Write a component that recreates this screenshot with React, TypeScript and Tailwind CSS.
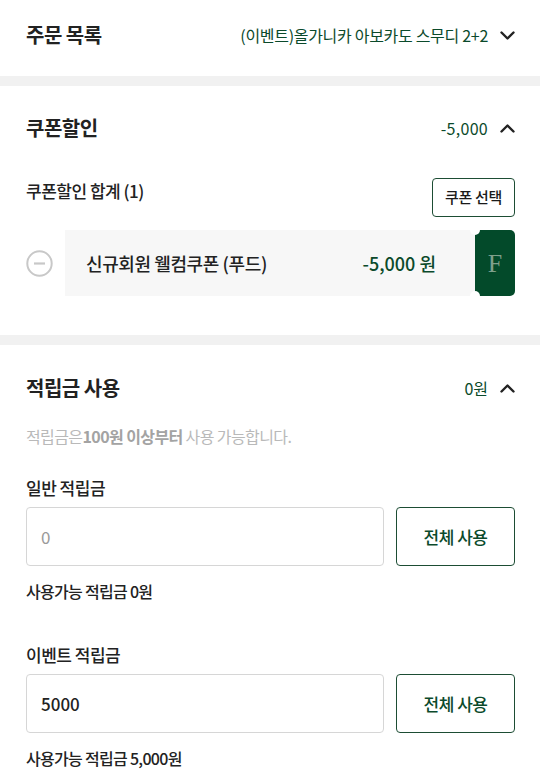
import React from "react";

const font = { fontFamily: '"Noto Sans CJK KR", "Noto Sans", sans-serif' };

function Chevron({ up = false }: { up?: boolean }) {
  return (
    <svg width="15" height="9" viewBox="0 0 15 9" className="shrink-0">
      <polyline
        points={up ? "1.5,7.5 7.5,1.5 13.5,7.5" : "1.5,1.5 7.5,7.5 13.5,1.5"}
        fill="none"
        stroke="#222"
        strokeWidth="2.4"
        strokeLinecap="round"
        strokeLinejoin="round"
      />
    </svg>
  );
}

function Divider() {
  return <div className="h-[10px] bg-[#f1f1f1]" />;
}

export default function App() {
  return (
    <div className="w-[540px] bg-white text-[#222]" style={font}>
      {/* 주문 목록 */}
      <div className="flex items-center justify-between pl-[26px] pr-[25px] pt-[21px] pb-[27px]">
        <div className="text-[20px] font-bold leading-[28px] tracking-[-0.5px]">주문 목록</div>
        <div className="flex items-center gap-[12px]">
          <span className="text-[16px] leading-[22px] text-[#0b4a2b] tracking-[-0.3px]">(이벤트)올가니카 아보카도 스무디 2+2</span>
          <Chevron />
        </div>
      </div>
      <Divider />

      {/* 쿠폰할인 */}
      <div className="pl-[26px] pr-[25px] pt-[28px] pb-[39px]">
        <div className="flex items-center justify-between">
          <div className="text-[20px] font-bold leading-[28px] tracking-[-0.5px]">쿠폰할인</div>
          <div className="flex items-center gap-[12px]">
            <span className="text-[16px] leading-[22px] text-[#0b4a2b] tracking-[0.3px]">-5,000</span>
            <Chevron up />
          </div>
        </div>
        <div className="mt-[36px] flex items-start justify-between">
          <div className="mt-[1px] text-[17px] font-medium leading-[24px] tracking-[-0.5px]">쿠폰할인 합계 (1)</div>
          <button className="flex h-[39px] w-[83px] items-center justify-center rounded-[4px] border border-[#1d4d34] text-[15px] font-medium text-[#1a1a1a] tracking-[-0.3px]">
            쿠폰 선택
          </button>
        </div>
        <div className="mt-[13px] flex items-center">
          <div className="flex w-[39px] shrink-0 items-center">
            <svg width="27" height="27" viewBox="0 0 27 27">
              <circle cx="13.5" cy="13.5" r="12.2" fill="none" stroke="#c8c8c8" strokeWidth="2" />
              <line x1="8" y1="13.5" x2="19" y2="13.5" stroke="#c8c8c8" strokeWidth="2.2" />
            </svg>
          </div>
          <div className="relative flex h-[66px] flex-1">
            <div className="flex flex-1 items-center justify-between bg-[#f7f7f7] pl-[21px] pr-[34px]">
              <span className="text-[18px] font-medium tracking-[-0.4px] text-[#222]">신규회원 웰컴쿠폰 (푸드)</span>
              <span className="text-[18px] font-medium tracking-[0px] text-[#0b4a2b]">-5,000 원</span>
            </div>
            <div className="w-[5px] bg-[#f7f7f7]" />
            <div className="flex w-[40px] items-center justify-center rounded-r-[5px] bg-[#034a2a]">
              <span className="text-[26px] text-[#7fa08c]" style={{ fontFamily: '"Liberation Serif", serif' }}>F</span>
            </div>
            <div className="absolute right-[35px] top-[-5px] h-[10px] w-[10px] rounded-full bg-white" />
            <div className="absolute bottom-[-5px] right-[35px] h-[10px] w-[10px] rounded-full bg-white" />
          </div>
        </div>
      </div>
      <Divider />

      {/* 적립금 사용 */}
      <div className="pl-[26px] pr-[25px] pt-[29px]">
        <div className="flex items-center justify-between">
          <div className="text-[20px] font-bold leading-[28px] tracking-[-0.5px]">적립금 사용</div>
          <div className="flex items-center gap-[12px]">
            <span className="text-[16px] leading-[22px] text-[#0b4a2b]">0원</span>
            <Chevron up />
          </div>
        </div>
        <div className="mt-[23px] text-[16px] leading-[22px] tracking-[-0.6px] text-[#b9b9b9]">
          적립금은<span className="font-bold text-[#a3a3a3]">100원 이상부터</span> 사용 가능합니다.
        </div>

        <div className="mt-[29px] text-[17px] font-medium leading-[24px] tracking-[-0.5px]">일반 적립금</div>
        <div className="mt-[7px] flex gap-[12px]">
          <div className="flex h-[59px] flex-1 items-center rounded-[4px] border border-[#d6d6d6] px-[14px] text-[17px] text-[#9a9a9a]">
            0
          </div>
          <button className="flex h-[59px] w-[119px] items-center justify-center rounded-[4px] border border-[#1d4d34] text-[17px] font-medium tracking-[-0.5px] text-[#0b4a2b]">
            전체 사용
          </button>
        </div>
        <div className="mt-[13px] text-[16px] font-medium leading-[24px] tracking-[-0.7px]">사용가능 적립금 0원</div>

        <div className="mt-[40px] text-[17px] font-medium leading-[24px] tracking-[-0.5px]">이벤트 적립금</div>
        <div className="mt-[7px] flex gap-[12px]">
          <div className="flex h-[59px] flex-1 items-center rounded-[4px] border border-[#d6d6d6] px-[14px] text-[17px] font-medium text-[#222]">
            5000
          </div>
          <button className="flex h-[59px] w-[119px] items-center justify-center rounded-[4px] border border-[#1d4d34] text-[17px] font-medium tracking-[-0.5px] text-[#0b4a2b]">
            전체 사용
          </button>
        </div>
        <div className="mt-[13px] pb-[20px] text-[16px] font-medium leading-[24px] tracking-[-0.7px]">사용가능 적립금 5,000원</div>
      </div>
    </div>
  );
}
